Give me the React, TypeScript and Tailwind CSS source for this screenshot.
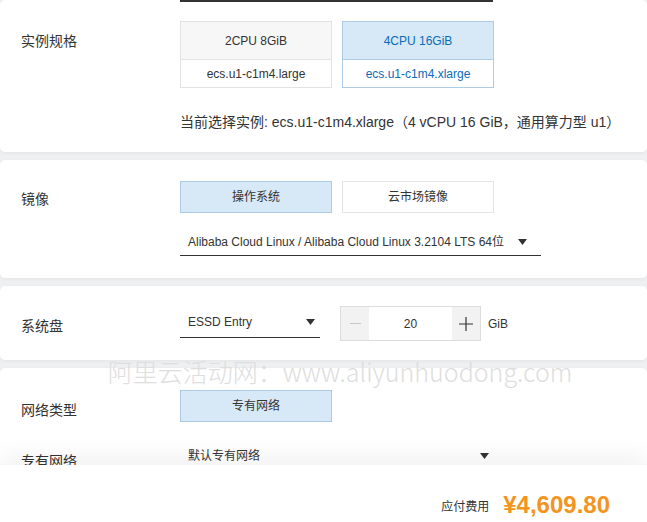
import React from 'react';

const Caret: React.FC = () => (
  <svg width="9" height="6" viewBox="0 0 9 6" className="shrink-0">
    <path d="M0 0h9L4.5 6z" fill="#333" />
  </svg>
);

const Card: React.FC<{ className?: string; children: React.ReactNode }> = ({ className = '', children }) => (
  <div className={`bg-white rounded-[5px] shadow-[0_1px_4px_rgba(0,0,0,0.05)] shrink-0 ${className}`}>{children}</div>
);

const App: React.FC = () => {
  return (
    <div className="w-[647px] h-[522px] bg-[#eff0f2] flex flex-col overflow-hidden relative font-['Liberation_Sans','Noto_Sans_CJK_SC',sans-serif] text-[#333]">
      <div className="h-[465px] flex flex-col gap-2 overflow-hidden">
        {/* 实例规格 */}
        <Card className="h-[152px]">
          <div className="ml-[180px] w-[313px] h-[1.5px] bg-[#333]" />
          <div className="flex mt-[19.5px]">
            <div className="w-[180px] pl-[21px] h-[39px] flex items-center text-[14px] pt-[2px]">实例规格</div>
            <div className="flex gap-[10px]">
              <div className="w-[152px] border border-[#e3e3e3] text-[12px]">
                <div className="h-[38px] bg-[#f7f7f7] border-b border-[#e3e3e3] flex items-center justify-center">2CPU 8GiB</div>
                <div className="h-[27px] flex items-center justify-center">ecs.u1-c1m4.large</div>
              </div>
              <div className="w-[152px] border border-[#aecbe6] text-[12px] text-[#0b6cb8]">
                <div className="h-[38px] bg-[#d7e8f7] border-b border-[#aecbe6] flex items-center justify-center">4CPU 16GiB</div>
                <div className="h-[27px] flex items-center justify-center">ecs.u1-c1m4.xlarge</div>
              </div>
            </div>
          </div>
          <div className="ml-[180px] mt-[24px] text-[14px] leading-[20px] whitespace-nowrap">
            当前选择实例: ecs.u1-c1m4.xlarge（4 vCPU 16 GiB，通用算力型 u1）
          </div>
        </Card>

        {/* 镜像 */}
        <Card className="h-[118px] pt-[21px]">
          <div className="flex">
            <div className="w-[180px] pl-[21px] h-[32px] flex items-center text-[14px] pt-[4px]">镜像</div>
            <div className="flex gap-[10px] text-[12px]">
              <div className="w-[152px] h-[32px] bg-[#d7e8f7] border border-[#aecbe6] flex items-center justify-center">操作系统</div>
              <div className="w-[152px] h-[32px] bg-white border border-[#e3e3e3] flex items-center justify-center">云市场镜像</div>
            </div>
          </div>
          <div className="ml-[180px] mt-[15px] w-[361px] h-[28px] border-b border-[#333] flex items-center justify-between pl-[8px] pr-[14px] text-[12px]">
            <span>Alibaba Cloud Linux / Alibaba Cloud Linux 3.2104 LTS 64位</span>
            <Caret />
          </div>
        </Card>

        {/* 系统盘 */}
        <Card className="h-[74px] pt-[20px]">
          <div className="flex items-start">
            <div className="w-[180px] pl-[21px] h-[35px] flex items-center text-[14px] pt-[5px]">系统盘</div>
            <div className="w-[140px] h-[31px] mt-[1px] border-b border-[#333] flex items-center justify-between pl-[8px] pr-[5px] text-[12px]">
              <span>ESSD Entry</span>
              <Caret />
            </div>
            <div className="ml-[20px] w-[141px] h-[35px] border border-[#dcdcdc] flex">
              <div className="w-[28px] bg-[#f2f2f2] flex items-center justify-center">
                <div className="w-[11px] h-px bg-[#c8c8c8]" />
              </div>
              <div className="flex-1 flex items-center justify-center text-[12px] bg-white">20</div>
              <div className="w-[28px] bg-[#f2f2f2] flex items-center justify-center">
                <svg width="14" height="14" viewBox="0 0 14 14">
                  <path d="M7 0v14M0 7h14" stroke="#333" strokeWidth="1.2" />
                </svg>
              </div>
            </div>
            <div className="ml-[7px] h-[35px] flex items-center text-[12px]">GiB</div>
          </div>
        </Card>

        {/* 网络 */}
        <Card className="h-[120px] pt-[22px]">
          <div className="flex">
            <div className="w-[180px] pl-[21px] h-[32px] flex items-center text-[14px] pt-[8px]">网络类型</div>
            <div className="w-[152px] h-[32px] bg-[#d7e8f7] border border-[#aecbe6] flex items-center justify-center text-[12px]">专有网络</div>
          </div>
          <div className="flex mt-[20px]">
            <div className="w-[180px] pl-[21px] h-[28px] flex items-center text-[14px] pt-[10px]">专有网络</div>
            <div className="w-[313px] h-[28px] flex items-center justify-between pl-[8px] pr-[4px] text-[12px]">
              <span>默认专有网络</span>
              <Caret />
            </div>
          </div>
        </Card>
      </div>

      <div className="h-[57px] bg-white relative z-10 shadow-[0_-10px_22px_rgba(0,0,0,0.05)] flex items-center justify-end pr-[37px] pt-[22px]">
        <span className="text-[12px] mr-[14px] mt-[5px]">应付费用</span>
        <span className="text-[24px] font-bold text-[#f39420] leading-none">¥4,609.80</span>
      </div>

      <div className="absolute left-0 right-0 top-[357px] flex justify-center pointer-events-none">
        <span className="text-[25px] leading-[28px] text-[#dedede] font-['Noto_Sans_CJK_SC',sans-serif] font-light pl-[33px]">
          阿里云活动网：www.aliyunhuodong.com
        </span>
      </div>
    </div>
  );
};

export default App;
